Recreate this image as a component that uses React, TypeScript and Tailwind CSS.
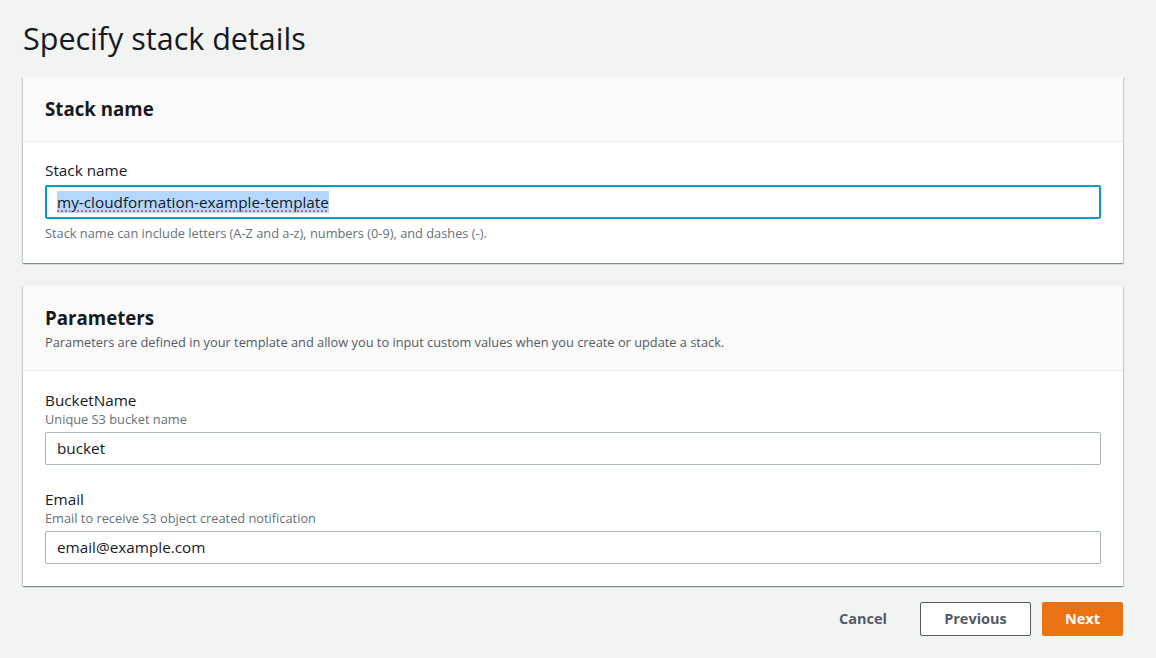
import React from "react";

const font = { fontFamily: '"Open Sans", "Noto Sans", Arial, sans-serif' };

const cardShadow =
  "bg-white shadow-[0_1px_1px_0_rgba(0,28,36,0.3),1px_1px_1px_0_rgba(0,28,36,0.15),-1px_1px_1px_0_rgba(0,28,36,0.15)]";

function Field({ label, hint, value }: { label: string; hint: string; value: string }) {
  return (
    <div className="flex flex-col">
      <label className="text-[15.3px] leading-[22px] text-[#16191f]">{label}</label>
      <div className="text-[12.8px] leading-[16px] text-[#687078]">{hint}</div>
      <div className="mt-[5px] h-[33px] flex items-center px-[11px] border border-[#aab7b8] rounded-[2px] bg-white text-[15.3px] text-[#16191f]">
        {value}
      </div>
    </div>
  );
}

export default function App() {
  return (
    <div className="min-h-screen bg-[#f2f3f3] pl-[23px] pr-[33px] pt-[20px]" style={font}>
      <h1 className="text-[30.5px] leading-[36px] text-[#16191f] font-normal mb-[21px]">Specify stack details</h1>

      <div className={cardShadow}>
        <div className="bg-[#fafafa] border-b border-[#eaeded] px-[22px] py-[20px]">
          <h2 className="text-[18.7px] leading-[24px] font-bold text-[#16191f]">Stack name</h2>
        </div>
        <div className="px-[22px] pt-[17px] pb-[22px]">
          <label className="block text-[15.3px] leading-[22px] text-[#16191f] mb-[4px]">Stack name</label>
          <div className="h-[34px] flex items-center px-[10px] border-2 border-[#00a1c9] rounded-[2px] bg-white text-[15.3px] text-[#16191f]">
            <span className="bg-[#b3d7fe] underline decoration-dotted decoration-[#e0443e] underline-offset-[3px]">
              my-cloudformation-example-template
            </span>
          </div>
          <p className="mt-[6px] text-[12.8px] leading-[16px] text-[#687078]">
            Stack name can include letters (A-Z and a-z), numbers (0-9), and dashes (-).
          </p>
        </div>
      </div>

      <div className={`mt-[23px] ${cardShadow}`}>
        <div className="bg-[#fafafa] border-b border-[#eaeded] px-[22px] pt-[20px] pb-[20px]">
          <h2 className="text-[18.7px] leading-[24px] font-bold text-[#16191f]">Parameters</h2>
          <p className="mt-[4px] text-[12.8px] leading-[16px] text-[#545b64]">
            Parameters are defined in your template and allow you to input custom values when you create or update a stack.
          </p>
        </div>
        <div className="px-[22px] pt-[18px] pb-[22px] flex flex-col gap-[23px]">
          <Field label="BucketName" hint="Unique S3 bucket name" value="bucket" />
          <Field label="Email" hint="Email to receive S3 object created notification" value="email@example.com" />
        </div>
      </div>

      <div className="mt-[16px] flex justify-end items-center gap-[11px]">
        <button className="h-[34px] px-[20px] text-[14.5px] font-bold text-[#545b64] mr-[2px]">Cancel</button>
        <button className="h-[34px] w-[111px] border border-[#545b64] rounded-[2px] bg-white text-[14.5px] font-bold text-[#545b64]">Previous</button>
        <button className="h-[34px] w-[81px] rounded-[2px] bg-[#ec7211] text-[14.5px] font-bold text-white">Next</button>
      </div>
    </div>
  );
}
